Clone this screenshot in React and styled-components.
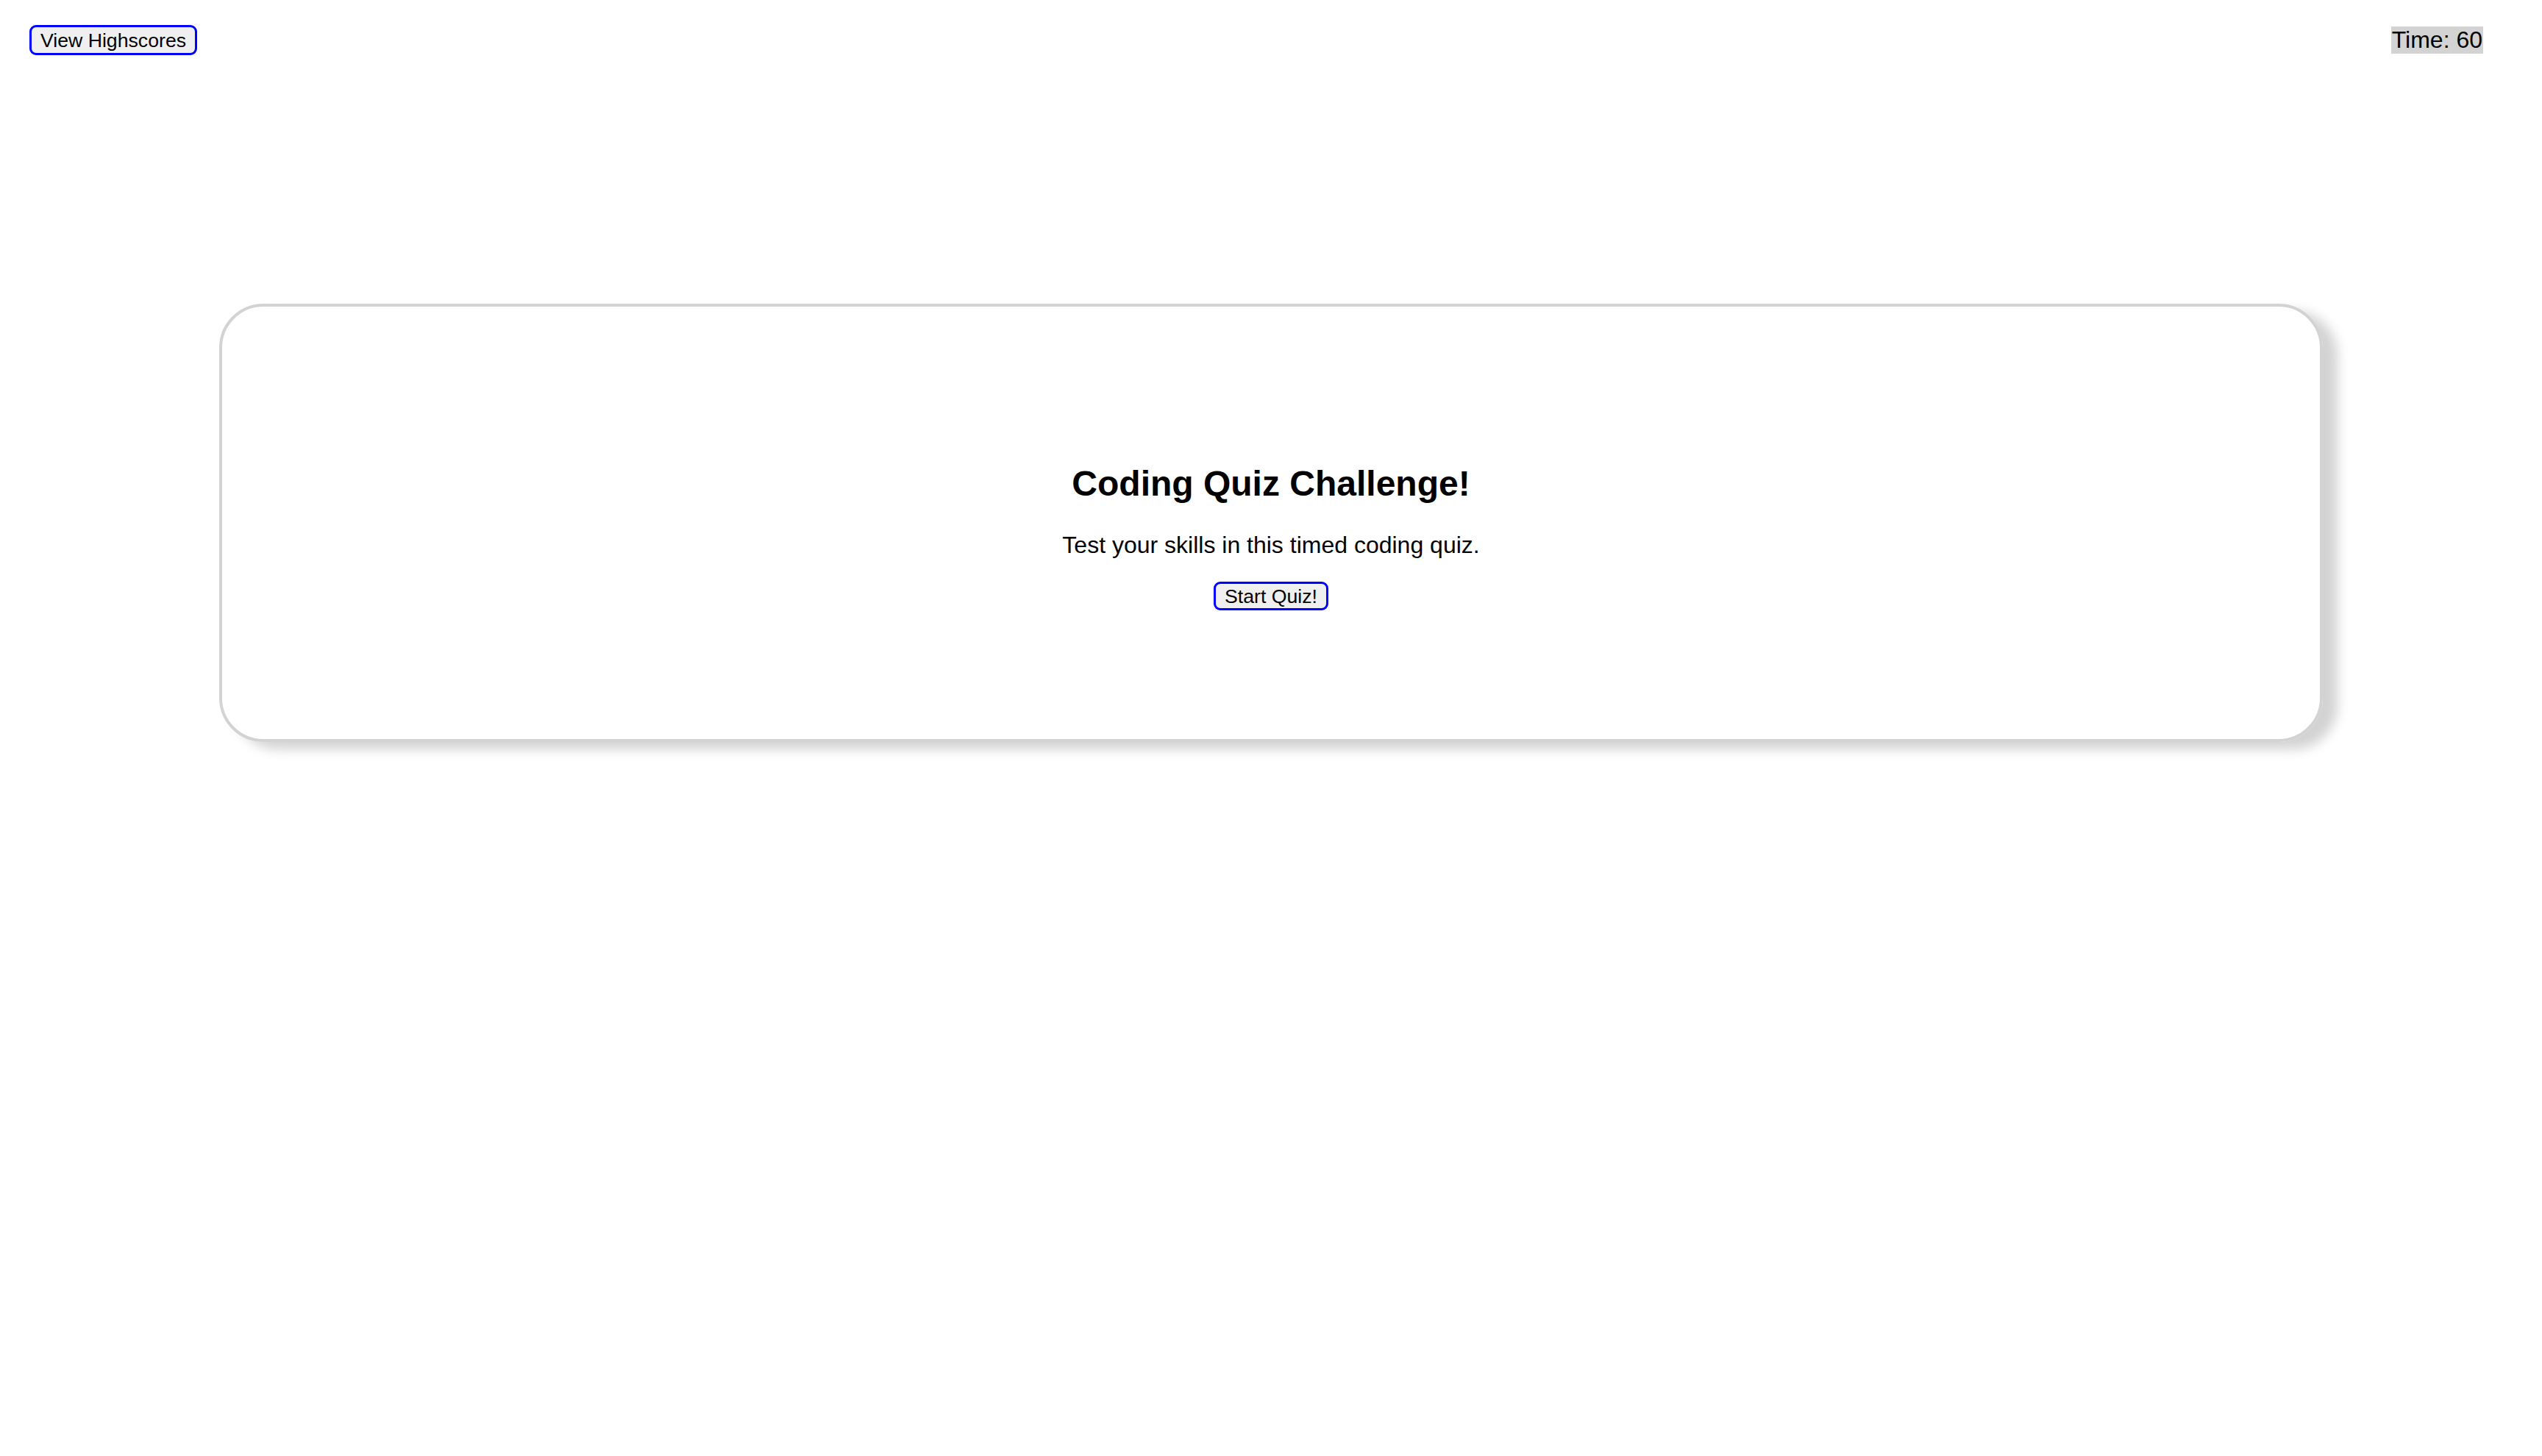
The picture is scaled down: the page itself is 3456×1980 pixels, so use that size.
import React from "react";
import styled, { createGlobalStyle } from "styled-components";

const Global = createGlobalStyle`
  html, body { margin: 0; padding: 0; background: #ffffff; }
  body { font-family: "Liberation Sans", Arial, sans-serif; color: #000; }
`;

const Page = styled.div`
  display: flex;
  flex-direction: column;
  width: 3456px;
  min-height: 1980px;
`;

const Header = styled.header`
  display: flex;
  align-items: center;
  justify-content: space-between;
  padding: 34px 80px 0 40px;
`;

const OutlineButton = styled.button`
  box-sizing: border-box;
  height: ${(p) => p.$h}px;
  padding: 0 12px;
  border: 3px solid #0000ff;
  border-radius: 9px;
  background: #efefef;
  color: #000;
  font-family: "Liberation Sans", Arial, sans-serif;
  font-size: 26.67px;
  line-height: 30px;
  cursor: pointer;
`;

const Timer = styled.span`
  background: #d3d3d3;
  font-size: 32px;
  line-height: 37px;
  padding: 0 1px;
`;

const Card = styled.main`
  box-sizing: border-box;
  width: 2860px;
  margin: 338px auto 0;
  padding: 213px 0 175px;
  border: 4px solid #d3d3d3;
  border-radius: 60px;
  box-shadow: 20px 10px 16px #d3d3d3;
  display: flex;
  flex-direction: column;
  align-items: center;
`;

const Title = styled.h2`
  margin: 0;
  font-size: 48px;
  line-height: 55px;
  font-weight: 700;
`;

const Lead = styled.p`
  margin: 38px 0 31px;
  font-size: 32px;
  line-height: 37px;
`;

export default function App() {
  return (
    <Page>
      <Global />
      <Header>
        <OutlineButton $h={41}>View Highscores</OutlineButton>
        <Timer>Time: 60</Timer>
      </Header>
      <Card>
        <Title>Coding Quiz Challenge!</Title>
        <Lead>Test your skills in this timed coding quiz.</Lead>
        <OutlineButton $h={39}>Start Quiz!</OutlineButton>
      </Card>
    </Page>
  );
}
